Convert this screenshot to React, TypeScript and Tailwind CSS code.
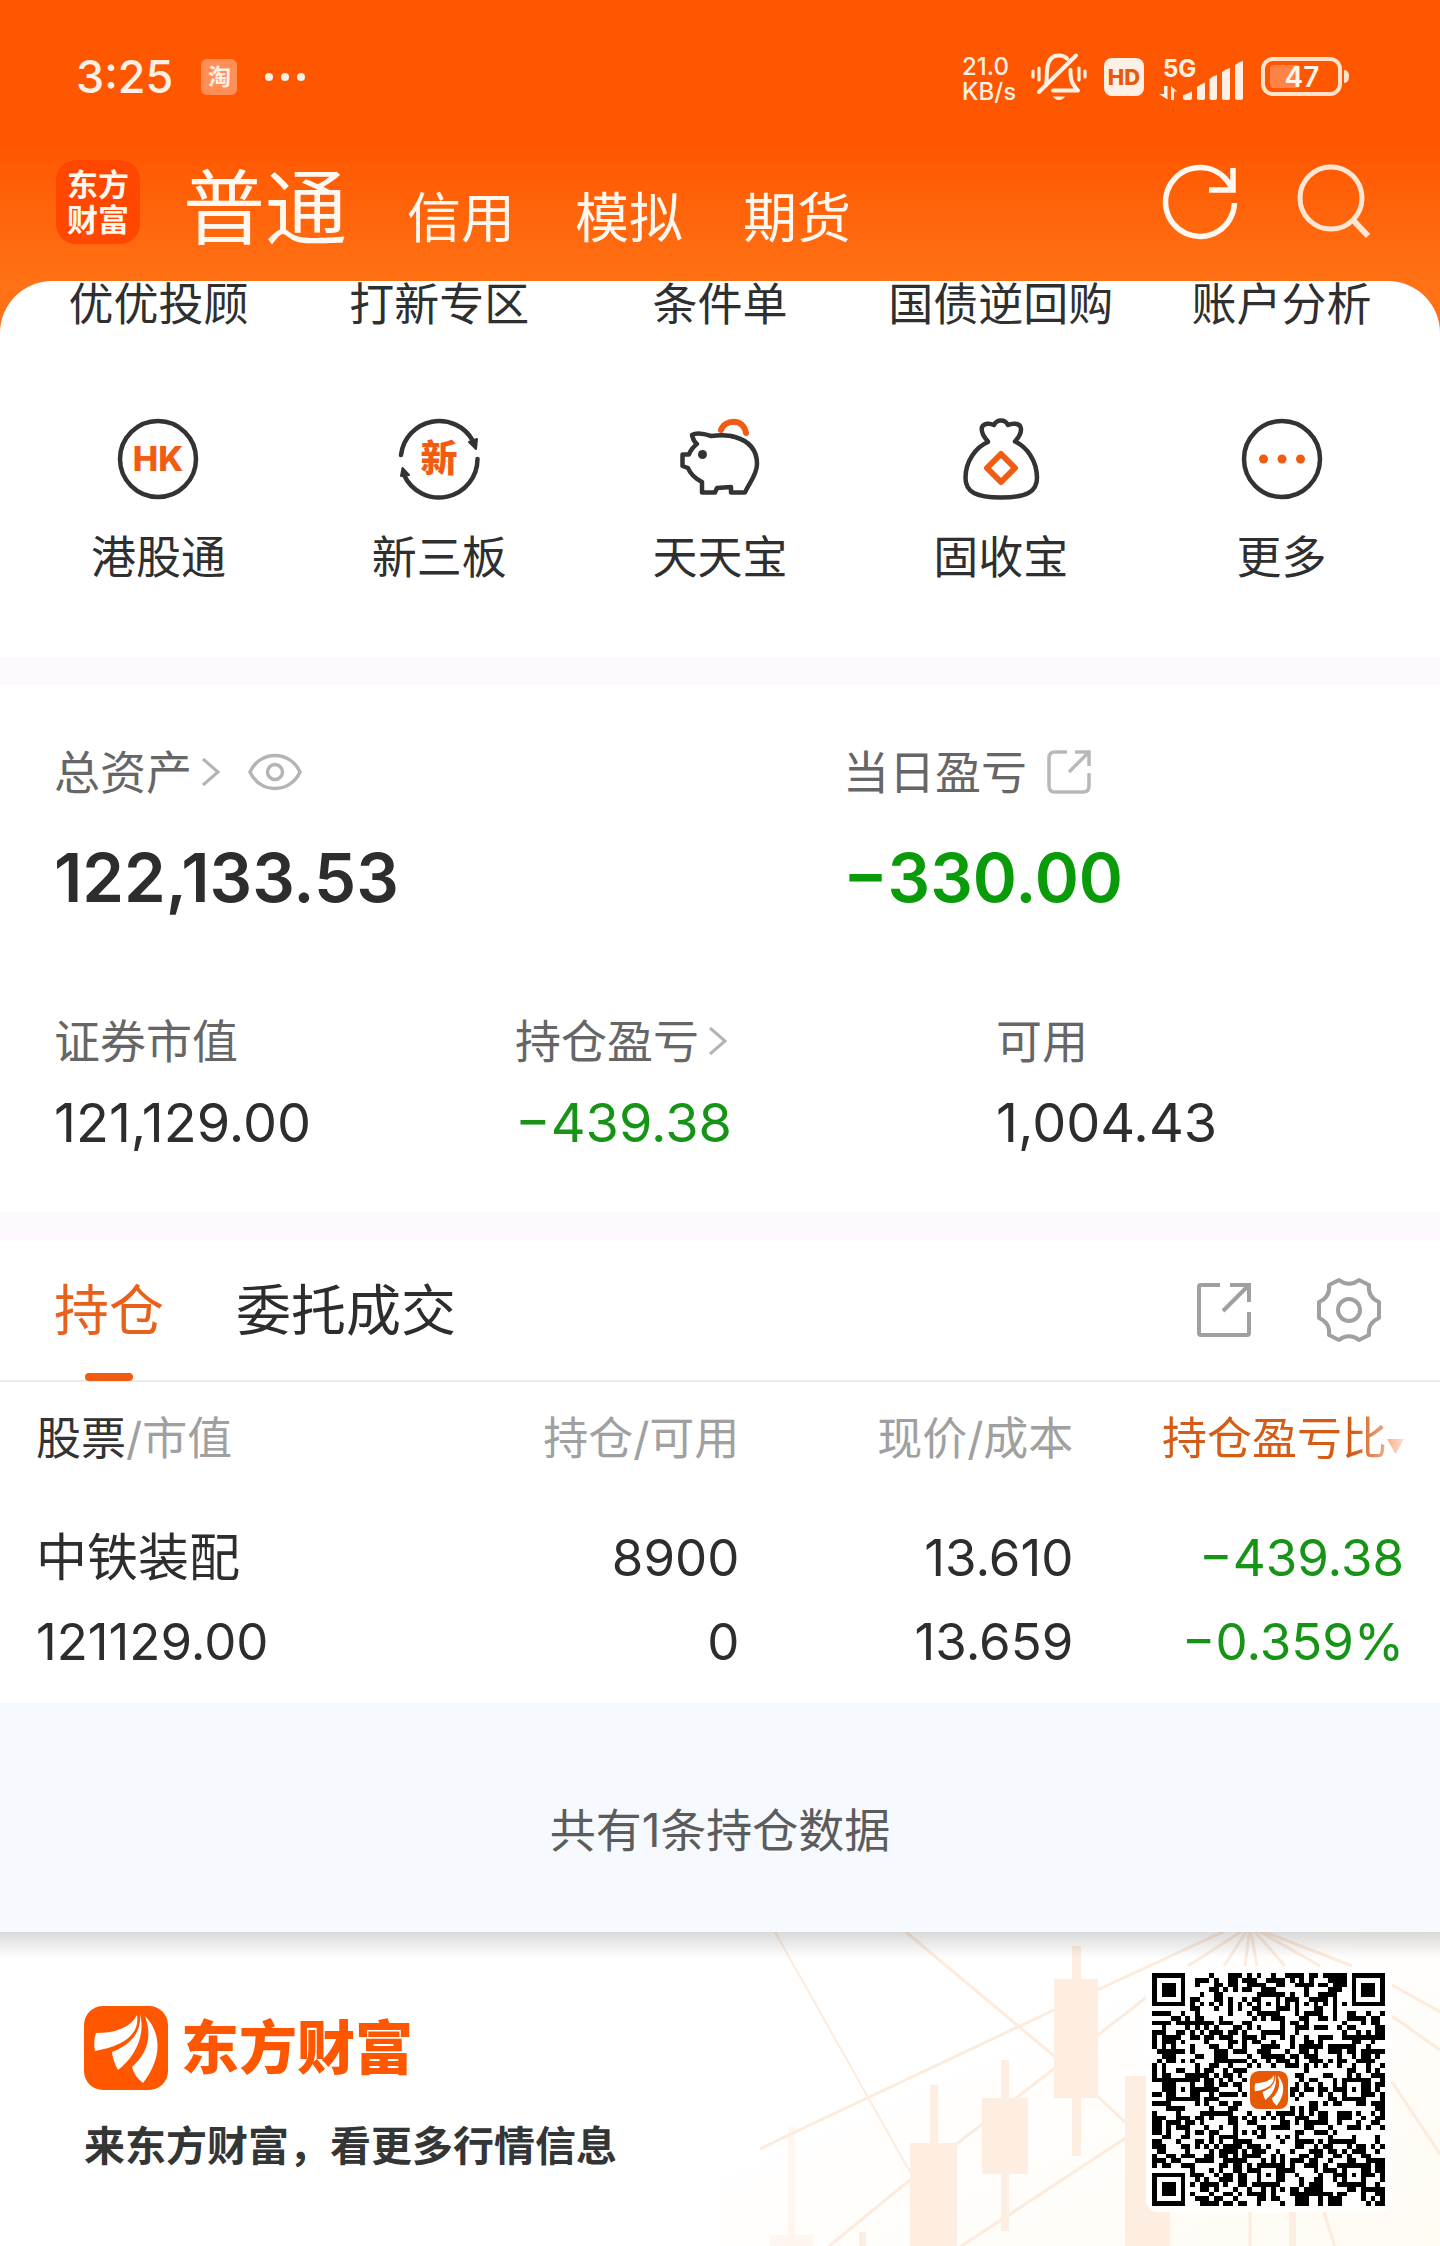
import React from "react";

const INK = "#333333";
const ORANGE = "#f25c12";

function BellOff() {
  return (
    <svg width="56" height="50" viewBox="0 0 56 50" fill="none" stroke="#fff0e6" strokeWidth="4" strokeLinecap="round" strokeLinejoin="round">
      <path d="M15 33 C16 29 15.500 24 16 19 C16.500 8 21 3.500 28 3.500 C31 3.500 34 4.500 36 6.500" />
      <path d="M8 40 L45 3.500" />
      <path d="M39.500 18 C39.500 27 40 31 47 38.500 H22" />
      <path d="M22 44.500 H34 C32 49 24 49 22 44.500Z" fill="#fff0e6" stroke="none" />
      <path d="M2 19 V25 M8 16 V28 M48 16 V28 M54 19 V25" strokeWidth="3.200" />
    </svg>
  );
}

function Signal() {
  return (
    <svg width="86" height="52" viewBox="0 -6 86 52" fill="#fff0e6">
      <text x="4" y="20" fontSize="24" fontWeight="700" fontFamily="Inter, sans-serif">5G</text>
      <path d="M5 29h3.500v13.500L0 37h5zM12 29l6 5.500h-3V43h-3z" />
      <path d="M24 38.500 L33 34.500 V41 Q33 43 31 43 H26 Q24 43 24 41Z" />
      <path d="M38 30 Q42 27 46 25.500 V41 Q46 43 44 43 H40 Q38 43 38 41Z" />
      <path d="M50.500 22 Q54 19 58 18 V41 Q58 43 56 43 H52.500 Q50.500 43 50.500 41Z" />
      <path d="M63 15 Q67 12 71 11 V41 Q71 43 69 43 H65 Q63 43 63 41Z" />
      <path d="M76 8 Q80 5 84 4 V41 Q84 43 82 43 H78 Q76 43 76 41Z" />
    </svg>
  );
}

function Battery() {
  return (
    <svg width="90" height="40" viewBox="0 0 90 40">
      <rect x="2" y="2" width="77" height="35" rx="10" fill="none" stroke="#ffe3cb" strokeWidth="4" />
      <rect x="9" y="8" width="30" height="23" rx="4" fill="#ff8247" />
      <path d="M83 13 Q88 13 88 19.500 Q88 26 83 26Z" fill="#ffe3cb" />
      <text x="41" y="30" textAnchor="middle" fontSize="28" fontWeight="600" fontFamily="Inter, sans-serif" fill="#fff4ea">47</text>
    </svg>
  );
}

function Refresh() {
  return (
    <svg width="76" height="76" viewBox="0 0 76 76" fill="none" stroke="#fff8f0" strokeWidth="5.500">
      <path d="M72.500 39 A34.500 34.500 0 1 1 70 25" />
      <path d="M71 4 V26 H47" />
    </svg>
  );
}

function Search() {
  return (
    <svg width="76" height="76" viewBox="0 0 76 76" fill="none" stroke="#ffe6d2" strokeWidth="5">
      <circle cx="36" cy="34" r="31" />
      <path d="M58 56 L73 72" strokeWidth="6" />
    </svg>
  );
}

function HkIcon() {
  return (
    <svg width="82" height="82" viewBox="0 0 82 82">
      <circle cx="41" cy="41" r="38" fill="none" stroke={INK} strokeWidth="4.500" />
      <text x="41" y="53" textAnchor="middle" fontSize="34" fontWeight="800" fontFamily="Inter, sans-serif" fill={ORANGE}>HK</text>
    </svg>
  );
}

function NewIcon() {
  return (
    <svg width="82" height="82" viewBox="0 0 82 82" fill="none" stroke={INK} strokeWidth="4.500" strokeLinecap="round">
      <path d="M3 37 A38.500 38.500 0 0 1 75 23" />
      <path d="M79.500 41 A38.500 38.500 0 0 1 6 57" />
      <path d="M71 24 L79 21 L78 31Z M3 58 L4.500 50 L11 57Z" fill={INK} strokeWidth="2" strokeLinejoin="round" />
      <text x="41" y="54" textAnchor="middle" fontSize="37" fontWeight="900" fontFamily="'Noto Sans CJK SC', sans-serif" fill={ORANGE} stroke="none">新</text>
    </svg>
  );
}

function PigIcon() {
  return (
    <svg width="82" height="82" viewBox="0 0 82 82" fill="none" stroke={INK} strokeWidth="4.500" strokeLinejoin="round" strokeLinecap="round">
      <path d="M42 12 C45 2 64 -1 67 15" stroke={ORANGE} strokeWidth="6" />
      <path d="M13 17 C18 14 26 16 32 18 C41 17 50 17 56 19 C70 23 78 32 78 46 C78 57 70 65 66 74.500 H52 V69 L38 70 L36 74.500 H23 V64 C15 60 11 55 9 50 L3.500 48 V36.500 H10 C11 33 15 28 18 26 C14 23 14 20 13 17Z" />
      <circle cx="23.500" cy="36.500" r="4.500" fill={INK} stroke="none" />
    </svg>
  );
}

function BagIcon() {
  return (
    <svg width="82" height="82" viewBox="0 0 82 82" fill="none" stroke={INK} strokeWidth="4.500" strokeLinejoin="round" strokeLinecap="round">
      <path d="M28 23.500 C23 18 21 13 22 9 C24 5 30 5 34 7 C37 1 45 1 48 7 C52 5 59 5 60.500 9 C62 13 60 18 55 23.500 C67 29 77 43 77 60 C77 74 66 79.500 41 79.500 C16 79.500 5.500 74 5.500 60 C5.500 43 16 29 28 24Z" />
      <path d="M41 36 L55 50 L41 64 L27 50Z" stroke={ORANGE} strokeWidth="6" />
    </svg>
  );
}

function MoreIcon() {
  return (
    <svg width="82" height="82" viewBox="0 0 82 82">
      <circle cx="41" cy="41" r="38" fill="none" stroke={INK} strokeWidth="4.500" />
      <g fill={ORANGE}>
        <circle cx="22.500" cy="41" r="4.500" />
        <circle cx="41" cy="41" r="4.500" />
        <circle cx="59.500" cy="41" r="4.500" />
      </g>
    </svg>
  );
}

function Chevron() {
  return (
    <svg width="20" height="30" viewBox="0 0 20 30" fill="none" stroke="#b4b4b4" strokeWidth="3">
      <path d="M2 2 L17 15 L2 28" />
    </svg>
  );
}

function Eye() {
  return (
    <svg width="54" height="38" viewBox="0 0 54 38" fill="none" stroke="#b4b4b4" strokeWidth="3.500">
      <path d="M2 19 C12 -3 42 -3 52 19 C42 41 12 41 2 19Z" />
      <circle cx="27" cy="19" r="7.500" />
    </svg>
  );
}

function ShareSmall() {
  return (
    <svg width="44" height="44" viewBox="0 0 44 44" fill="none" stroke="#b9b9b9" strokeWidth="3.500">
      <path d="M20 2 H8 Q2 2 2 8 V36 Q2 42 8 42 H36 Q42 42 42 36 V23" />
      <path d="M28 2 H42 V16 M42 2 L22 22" />
    </svg>
  );
}

function ShareLarge() {
  return (
    <svg width="56" height="56" viewBox="0 0 56 56" fill="none" stroke="#a0a0a0" strokeWidth="4">
      <path d="M24 3 H5 Q3 3 3 5 V51 Q3 53 5 53 H51 Q53 53 53 51 V30" />
      <path d="M34 3 H53 V20 M53 3 L27 29" />
    </svg>
  );
}

function Gear() {
  return (
    <svg width="66" height="66" viewBox="0 0 66 66" fill="none" stroke="#a0a0a0" strokeWidth="4" strokeLinejoin="round">
      <path d="M23 3 C29 8 37 8 43 3 L53 8 C52 16 56 22 63 25 V41 C56 44 52 50 53 58 L43 63 C37 58 29 58 23 63 L13 58 C14 50 10 44 3 41 V25 C10 22 14 16 13 8Z" />
      <circle cx="33" cy="33" r="11" />
    </svg>
  );
}

function BrandMark({ size, color }: { size: number; color: string }) {
  return (
    <svg width={size} height={size} viewBox="0 0 84 84">
      <rect width="84" height="84" rx="19" fill={color} />
      <g fill="#fff">
        <path d="M53 9 C56 28 40 40 11 45 Q9 35 12 27 C32 27 47 21 53 9Z" />
        <path d="M56 8 C62 30 50 52 34 64 Q29 55 28 46 C44 40 58 28 56 8Z" />
        <path d="M61 10 C76 25 80 50 59 77 Q50 70 48 61 C62 49 69 32 61 10Z" />
      </g>
    </svg>
  );
}

const QR_SIZE = 49;

function buildQr(): string {
  const n = QR_SIZE;
  let seed = 20387;
  const next = () => {
    seed = (seed * 1103515245 + 12345) % 2147483648;
    return seed / 2147483648;
  };
  const grid = Array.from({ length: n }, () => Array.from({ length: n }, () => next() > 0.49));
  for (let i = 8; i < n - 8; i++) {
    grid[6][i] = i % 2 === 0;
    grid[i][6] = i % 2 === 0;
  }
  const ring = (cx: number, cy: number, r: number, blank: number) => {
    for (let y = cy - r; y <= cy + r; y++) {
      for (let x = cx - r; x <= cx + r; x++) {
        if (x < 0 || y < 0 || x >= n || y >= n) continue;
        const d = Math.max(Math.abs(x - cx), Math.abs(y - cy));
        grid[y][x] = d !== blank && d < 4;
      }
    }
  };
  ring(3, 3, 4, 2);
  ring(n - 4, 3, 4, 2);
  ring(3, n - 4, 4, 2);
  for (const [x, y] of [[24, 6], [6, 24], [42, 24], [24, 42], [42, 42]]) ring(x, y, 2, 1);
  for (let y = 20; y < 29; y++) for (let x = 20; x < 29; x++) grid[y][x] = false;
  let d = "";
  grid.forEach((row, y) => row.forEach((on, x) => { if (on) d += `M${x} ${y}h1v1h-1z`; }));
  return d;
}

const QR_PATH = buildQr();

function QrCode() {
  return (
    <div className="relative flex rounded-xl bg-white p-[6px]">
      <svg role="img" aria-label="二维码" width="233" height="233" viewBox="0 0 49 49" shapeRendering="crispEdges">
        <path d={QR_PATH} />
      </svg>
      <div className="absolute inset-0 flex items-center justify-center">
        <BrandMark size={38} color="#e65a05" />
      </div>
    </div>
  );
}

function FooterArt() {
  return (
    <svg className="absolute right-0 top-0" width="720" height="315" viewBox="0 0 720 315" fill="none">
      <defs>
        <linearGradient id="glow" x1="0" y1="0" x2="1" y2="1">
          <stop offset="0.35" stopColor="#fff" />
          <stop offset="1" stopColor="#fffbf3" />
        </linearGradient>
      </defs>
      <rect width="720" height="315" fill="url(#glow)" />
      <g stroke="#fdebdd" strokeWidth="3">
        <path d="M55 0 L190 240" strokeWidth="2" />
        <path d="M186 0 L334 124 L405 190" />
        <path d="M40 217 L75 200 L334 78 L520 -8" />
        <path d="M108 315 L190 248 L427 65" />
        <path d="M240 315 L430 190" />
        <path d="M530 -6 L468 34 M530 -6 L504 34 M530 -6 L525 34 M530 -6 L537 34 M530 -6 L565 34 M530 -6 L600 34 M530 -6 L632 34" />
        <path d="M672 53 L720 80 M672 84 L720 118 M672 150 L720 222 M530 280 V315 M604 280 L615 315" />
      </g>
      <g fill="#feeee1">
        <path d="M334 47h44v119h-44zM352 14h9v210h-9zM262 166h46v76h-46zM281 128h8v171h-8zM190 211h47v104h-47zM210 153h8v60h-8zM405 144h45v171h-45zM569 280h7v35h-7zM139 300h7v15h-7z" />
        <path d="M50 303h43v12h-43zM68 195h7v108h-7z" opacity="0.5" />
      </g>
    </svg>
  );
}

const shortcuts = [
  { above: "优优投顾", label: "港股通", icon: <HkIcon /> },
  { above: "打新专区", label: "新三板", icon: <NewIcon /> },
  { above: "条件单", label: "天天宝", icon: <PigIcon /> },
  { above: "国债逆回购", label: "固收宝", icon: <BagIcon /> },
  { above: "账户分析", label: "更多", icon: <MoreIcon /> },
];

function StatusBar() {
  return (
    <div className="flex h-[52px] items-center pl-[76px] pr-[89px] text-[#fff0e6]">
      <span className="text-[45px] leading-[52px] font-medium">3:25</span>
      <span className="ml-[28px] flex size-9 items-center justify-center rounded-md bg-[#ff8f57] text-[23px] leading-9 font-bold">淘</span>
      <span className="ml-[28px] flex gap-2">
        <i className="size-2 rounded-full bg-[#fff0e6]" />
        <i className="size-2 rounded-full bg-[#fff0e6]" />
        <i className="size-2 rounded-full bg-[#fff0e6]" />
      </span>
      <span className="ml-auto w-[56px] pt-1 text-[24px] leading-[25px] font-medium">21.0 KB/s</span>
      <span className="ml-[13px]"><BellOff /></span>
      <span className="ml-[17px] flex h-[38px] w-10 items-center justify-center rounded-lg bg-[#fff0e6] text-[22px] leading-[38px] font-extrabold text-[#e8590c]">HD</span>
      <span className="ml-[15px]"><Signal /></span>
      <span className="ml-[16px]"><Battery /></span>
    </div>
  );
}

function Header() {
  return (
    <header className="bg-linear-to-b from-[#ff5600] from-42% to-[#ff7114] to-85% pt-[51px] pb-[89px]">
      <StatusBar />
      <nav className="mt-[57px] flex h-[84px] items-center pl-14 pr-[69px] text-[#fff8f0]">
        <a href="#home" className="flex size-[84px] flex-col items-center justify-center rounded-[20px] bg-[#ff4700] text-[31px] leading-[35px] font-bold">
          <span>东方</span>
          <span>财富</span>
        </a>
        <div className="ml-[43px] flex items-baseline gap-[60px] pt-6 text-[54px] leading-[84px]">
          <a href="#normal" className="text-[82px]">普通</a>
          <a href="#credit">信用</a>
          <a href="#demo">模拟</a>
          <a href="#futures">期货</a>
        </div>
        <button aria-label="刷新" className="ml-auto"><Refresh /></button>
        <button aria-label="搜索" className="ml-[57px]"><Search /></button>
      </nav>
    </header>
  );
}

function Summary() {
  return (
    <section className="px-[54px] pt-[57px] pb-[59px] text-[46px] leading-[60px] text-[#666]">
      <div className="grid grid-cols-[789fr_543fr]">
        <div>
          <div className="flex items-center">
            <a href="#assets" className="flex items-center gap-[9px]">总资产<Chevron /></a>
            <button aria-label="隐藏金额" className="ml-[27px]"><Eye /></button>
          </div>
          <p className="mt-[26px] text-[67px] leading-[100px] font-semibold text-[#2d2d2d]">122,133.53</p>
        </div>
        <div>
          <div className="flex items-center gap-5">
            <span>当日盈亏</span>
            <button aria-label="分享当日盈亏"><ShareSmall /></button>
          </div>
          <p className="mt-[26px] text-[67px] leading-[100px] font-semibold text-[#0a9b0a]">−330.00</p>
        </div>
      </div>
      <div className="mt-[83px] grid grid-cols-[461fr_481fr_390fr]">
        <div>
          <p>证券市值</p>
          <p className="mt-[22px] text-[54px] text-[#2d2d2d]">121,129.00</p>
        </div>
        <div>
          <a href="#profit" className="flex items-center gap-[9px]">持仓盈亏<Chevron /></a>
          <p className="mt-[22px] text-[54px] text-[#169416]">−439.38</p>
        </div>
        <div>
          <p>可用</p>
          <p className="mt-[22px] text-[54px] text-[#2d2d2d]">1,004.43</p>
        </div>
      </div>
    </section>
  );
}

function Holdings() {
  return (
    <section>
      <div className="flex h-[142px] items-center border-b-2 border-[#ebebeb] pl-[54px] pr-[58px] text-[55px] leading-[72px]">
        <button className="relative flex h-[142px] items-center text-[#e8601a]">
          持仓
          <span className="absolute bottom-0 left-1/2 h-2 w-12 -translate-x-1/2 rounded-full bg-[#f25c12]" />
        </button>
        <button className="ml-[72px] text-[#2d2d2d]">委托成交</button>
        <button aria-label="分享持仓" className="ml-auto"><ShareLarge /></button>
        <button aria-label="设置" className="ml-[64px]"><Gear /></button>
      </div>
      <div className="px-9">
        <table className="w-full table-fixed text-right text-[51px] leading-[84px] text-[#2d2d2d]">
          <colgroup>
            <col className="w-[27%]" />
            <col className="w-[25%]" />
            <col className="w-[25%]" />
            <col className="w-[23%]" />
          </colgroup>
          <thead className="text-[45px] leading-[60px] text-[#a0a0a0]">
            <tr className="h-[134px] align-top whitespace-nowrap">
              <th className="pt-[27px] text-left font-normal"><span className="text-[#333]">股票</span>/市值</th>
              <th className="pt-[27px] pr-2 font-normal">持仓/可用</th>
              <th className="pt-[27px] pr-4 font-normal">现价/成本</th>
              <th className="pt-[27px] font-normal">
                <button className="inline-flex items-center text-[#d55c17] mask-r-from-80% mask-r-to-105%">
                  持仓盈亏比
                  <svg width="17" height="60" viewBox="0 0 17 60" fill={ORANGE}><path d="M0 30h17l-8.500 15z" /></svg>
                </button>
              </th>
            </tr>
          </thead>
          <tbody>
            <tr>
              <td className="text-left">中铁装配</td>
              <td className="pr-2">8900</td>
              <td className="pr-4">13.610</td>
              <td className="text-[#169416]">−439.38</td>
            </tr>
            <tr>
              <td className="text-left">121129.00</td>
              <td className="pr-2">0</td>
              <td className="pr-4">13.659</td>
              <td className="text-[#169416]">−0.359%</td>
            </tr>
          </tbody>
        </table>
      </div>
      <p className="mt-[19px] bg-[#f6faff] pt-[97px] pb-[72px] text-center text-[46px] leading-[60px] text-[#5c5c5c]">共有1条持仓数据</p>
    </section>
  );
}

function Footer() {
  return (
    <footer className="relative overflow-hidden bg-white">
      <FooterArt />
      <div className="absolute inset-x-0 top-0 h-[26px] bg-linear-to-b from-black/15 to-transparent" />
      <div className="relative flex h-[314px] items-start justify-between pl-[84px] pr-[49px]">
        <div className="pt-[74px]">
          <div className="flex items-center gap-[13px]">
            <BrandMark size={84} color="#ff5600" />
            <span className="text-[58px] leading-[84px] font-black text-[#ff5600]">东方财富</span>
          </div>
          <p className="mt-[26px] text-[41px] leading-[60px] font-bold text-[#333635]">来东方财富，看更多行情信息</p>
        </div>
        <div className="pt-[35px]"><QrCode /></div>
      </div>
    </footer>
  );
}

export default function App() {
  return (
    <div className="w-full bg-white font-[Inter,'Noto_Sans_CJK_SC',sans-serif]">
      <Header />
      <main className="relative -mt-[52px] rounded-t-[52px] bg-white">
        <section className="grid grid-cols-5 px-[18px] pb-[69px] text-center text-[45px] leading-[60px] text-[#2f2f2f]">
          {shortcuts.map((s) => (
            <div key={s.label} className="flex flex-col items-center whitespace-nowrap">
              <a href="#top" className="-mt-[6px]">{s.above}</a>
              <a href="#item" className="mt-[83px] flex flex-col items-center gap-[28px]">
                {s.icon}
                <span>{s.label}</span>
              </a>
            </div>
          ))}
        </section>
        <div className="h-7 bg-[#fdf9fe]" />
        <Summary />
        <div className="h-7 bg-[#fdf9fe]" />
        <Holdings />
      </main>
      <Footer />
    </div>
  );
}
